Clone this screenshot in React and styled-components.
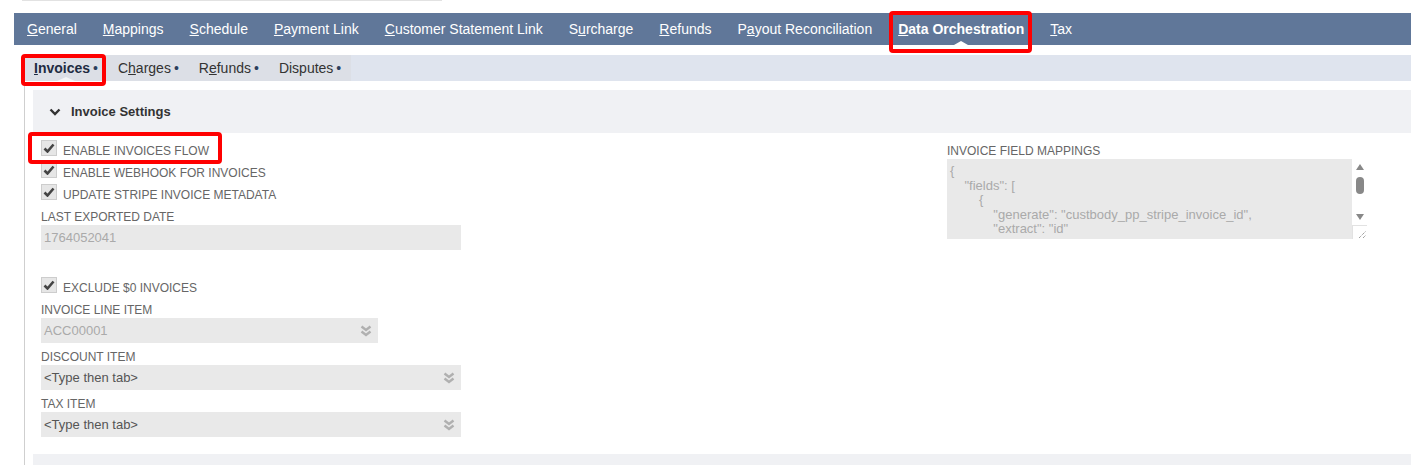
import styled, { createGlobalStyle } from "styled-components";

const Global = createGlobalStyle`
  body {
    margin: 0;
    background: #fff;
    font-family: "Liberation Sans", Arial, sans-serif;
  }
`;

const Page = styled.div`
  height: 465px;
  overflow: hidden;
`;

const TopRule = styled.div`
  margin-left: 22px;
  width: 420px;
  height: 1px;
  background: #e2e2e2;
`;

const TabBar = styled.div`
  display: flex;
  margin: 12px 0 0 14px;
  height: 32px;
  background: #607799;
`;

const Tab = styled.div`
  position: relative;
  padding: 0 13px;
  line-height: 32px;
  font-size: 14px;
  color: #fff;
  font-weight: ${(p) => (p.$active ? "bold" : "normal")};
  white-space: nowrap;

  &::after {
    content: "";
    display: ${(p) => (p.$active ? "block" : "none")};
    position: absolute;
    left: 50%;
    bottom: 0;
    margin-left: -7px;
    border-left: 7px solid transparent;
    border-right: 7px solid transparent;
    border-bottom: 4px solid #fff;
  }
`;

const Highlight = styled.span`
  position: absolute;
  top: ${(p) => p.$t}px;
  right: ${(p) => p.$r}px;
  bottom: ${(p) => p.$b}px;
  left: ${(p) => p.$l}px;
  border: 4px solid #ff0000;
  border-radius: 4px;
  pointer-events: none;
  z-index: 2;
`;

const SubBar = styled.div`
  display: flex;
  margin: 10px 0 0 22px;
  height: 26px;
  background: #dfe4ee;
`;

const SubTabs = styled.div`
  display: flex;
  padding-left: 2px;
  background: #dcdfe6;
`;

const SubTab = styled.div`
  position: relative;
  padding: 0 10px;
  line-height: 26px;
  font-size: 14px;
  color: ${(p) => (p.$active ? "#1e2b42" : "#333")};
  font-weight: ${(p) => (p.$active ? "bold" : "normal")};
  white-space: nowrap;

  &::after {
    content: "";
    display: ${(p) => (p.$active ? "block" : "none")};
    position: absolute;
    left: 50%;
    bottom: 0;
    margin-left: -9px;
    border-left: 9px solid transparent;
    border-right: 9px solid transparent;
    border-bottom: 4px solid #f4f5f7;
  }
`;

const Dot = styled.span`
  margin-left: 3px;
  font-weight: normal;
  color: #2c3e5c;
`;

const Content = styled.div`
  margin-left: 24px;
  border-left: 1px solid #cfcfcf;
  padding: 9px 0 0 8px;
`;

const SectionHeader = styled.div`
  display: flex;
  align-items: center;
  gap: 10px;
  height: 43px;
  padding-left: 16px;
  background: #f0f1f4;
  font-size: 13px;
  font-weight: bold;
  color: #333;
`;

const Body = styled.div`
  display: grid;
  grid-template-columns: 906px 420px;
  padding: 7px 0 0 8px;
`;

const Column = styled.div`
  display: flex;
  flex-direction: column;
`;

const CheckRow = styled.div`
  position: relative;
  display: flex;
  width: fit-content;
  height: 22px;
  margin-top: ${(p) => p.$mt || 0}px;
`;

const Box = styled.span`
  box-sizing: border-box;
  width: 16px;
  height: 16px;
  border: 1px solid #cdcdcd;
  background: #e6e6e6;
  display: flex;
  align-items: center;
  justify-content: center;
`;

const CheckLabel = styled.span`
  margin: 4px 0 0 6px;
  font-size: 12px;
  line-height: 14px;
  color: #666;
`;

const FieldLabel = styled.div`
  margin-top: ${(p) => p.$mt}px;
  font-size: 12px;
  line-height: 14px;
  color: #666;
`;

const Input = styled.div`
  box-sizing: border-box;
  display: flex;
  align-items: center;
  justify-content: space-between;
  margin-top: 1px;
  width: ${(p) => p.$w || 420}px;
  height: 25px;
  padding: 0 6px 0 3px;
  background: #e9e9e9;
  font-size: 13px;
  color: ${(p) => (p.$muted ? "#aaa" : "#555")};
`;

const TextArea = styled.div`
  display: flex;
  margin-top: 1px;
  height: 80px;
`;

const Code = styled.div`
  box-sizing: border-box;
  width: 405px;
  height: 80px;
  overflow: hidden;
  padding: 5px 3px;
  background: #e9e9e9;
  white-space: pre;
  font-size: 13px;
  line-height: 14.5px;
  color: #aaa;
`;

const Scroll = styled.div`
  box-sizing: border-box;
  display: flex;
  flex-direction: column;
  align-items: center;
  width: 15px;
  padding-top: 5px;
  background: #fff;
`;

const Arrow = styled.span`
  width: 0;
  height: 0;
  margin-top: ${(p) => p.$mt || 0}px;
  border-left: 4.5px solid transparent;
  border-right: 4.5px solid transparent;
  ${(p) => (p.$down ? "border-top" : "border-bottom")}: 6px solid #888;
`;

const Thumb = styled.span`
  margin-top: 7px;
  width: 8px;
  height: 17px;
  border-radius: 4px;
  background: #888;
`;

const Resize = styled.span`
  box-sizing: border-box;
  display: flex;
  align-items: flex-end;
  justify-content: flex-end;
  margin-top: 5px;
  width: 15px;
  height: 14px;
  border-top: 1px solid #e2e2e2;
  border-left: 1px solid #e2e2e2;
`;

const Footer = styled.div`
  margin-top: 17px;
  height: 20px;
  background: #f0f1f4;
`;

const Check = () => (
  <Box>
    <svg width="12" height="10" viewBox="0 0 12 10">
      <path d="M1.5 5.5 L4.5 8.5 L10.5 1.5" fill="none" stroke="#444" strokeWidth="2.6" />
    </svg>
  </Box>
);

const Chevrons = () => (
  <svg width="12" height="12" viewBox="0 0 12 12">
    <path d="M1.5 1.5 L6 5 L10.5 1.5 M1.5 6.5 L6 10 L10.5 6.5" fill="none" stroke="#b0b0b0" strokeWidth="2.4" />
  </svg>
);

const tabs = [
  ["G", "eneral"],
  ["M", "appings"],
  ["S", "chedule"],
  ["P", "ayment Link"],
  ["C", "ustomer Statement Link"],
  ["S", "urcharge", 1],
  ["R", "efunds"],
  ["P", "ayout Reconciliation", 1],
  ["D", "ata Orchestration"],
  ["T", "ax"],
];

const renderTab = ([a, rest, second]) =>
  second ? (
    <>
      {a}
      <u>{rest[0]}</u>
      {rest.slice(1)}
    </>
  ) : (
    <>
      <u>{a}</u>
      {rest}
    </>
  );

const json = `{
    "fields": [
        {
            "generate": "custbody_pp_stripe_invoice_id",
            "extract": "id"
        },
        {
            "generate": "memo",
            "extract": "description"
        }
    ]
}`;

export default function App() {
  return (
    <Page>
      <Global />
      <TopRule />
      <TabBar>
        {tabs.map((t, i) => (
          <Tab key={i} $active={i === 8}>
            {renderTab(t)}
            {i === 8 && <Highlight $t={-2} $r={5} $b={-8} $l={4} />}
          </Tab>
        ))}
      </TabBar>

      <SubBar>
        <SubTabs>
          <SubTab $active>
            <u>I</u>nvoices<Dot>•</Dot>
            <Highlight $t={-1} $r={2} $b={-5} $l={-3} />
          </SubTab>
          <SubTab>
            C<u>h</u>arges<Dot>•</Dot>
          </SubTab>
          <SubTab>
            R<u>e</u>funds<Dot>•</Dot>
          </SubTab>
          <SubTab>
            Disputes<Dot>•</Dot>
          </SubTab>
        </SubTabs>
      </SubBar>

      <Content>
        <SectionHeader>
          <svg width="12" height="8" viewBox="0 0 12 8">
            <path d="M1.5 1.5 L6 6 L10.5 1.5" fill="none" stroke="#333" strokeWidth="2.4" />
          </svg>
          Invoice Settings
        </SectionHeader>

        <Body>
          <Column>
            <CheckRow>
              <Check />
              <CheckLabel>ENABLE INVOICES FLOW</CheckLabel>
              <Highlight $t={-8} $r={-13} $b={-2} $l={-13} />
            </CheckRow>
            <CheckRow>
              <Check />
              <CheckLabel>ENABLE WEBHOOK FOR INVOICES</CheckLabel>
            </CheckRow>
            <CheckRow>
              <Check />
              <CheckLabel>UPDATE STRIPE INVOICE METADATA</CheckLabel>
            </CheckRow>
            <FieldLabel $mt={4}>LAST EXPORTED DATE</FieldLabel>
            <Input $muted>1764052041</Input>

            <CheckRow $mt={27}>
              <Check />
              <CheckLabel>EXCLUDE $0 INVOICES</CheckLabel>
            </CheckRow>
            <FieldLabel $mt={4}>INVOICE LINE ITEM</FieldLabel>
            <Input $muted $w={337}>
              ACC00001
              <Chevrons />
            </Input>
            <FieldLabel $mt={7}>DISCOUNT ITEM</FieldLabel>
            <Input>
              {"<Type then tab>"}
              <Chevrons />
            </Input>
            <FieldLabel $mt={7}>TAX ITEM</FieldLabel>
            <Input>
              {"<Type then tab>"}
              <Chevrons />
            </Input>
          </Column>

          <Column>
            <FieldLabel $mt={4}>INVOICE FIELD MAPPINGS</FieldLabel>
            <TextArea>
              <Code>{json}</Code>
              <Scroll>
                <Arrow />
                <Thumb />
                <Arrow $down $mt={20} />
                <Resize>
                  <svg width="10" height="10" viewBox="0 0 10 10">
                    <path d="M2 9 L9 2 M6 9 L9 6" stroke="#555" strokeWidth="0.8" strokeDasharray="1 1" />
                  </svg>
                </Resize>
              </Scroll>
            </TextArea>
          </Column>
        </Body>

        <Footer />
      </Content>
    </Page>
  );
}
